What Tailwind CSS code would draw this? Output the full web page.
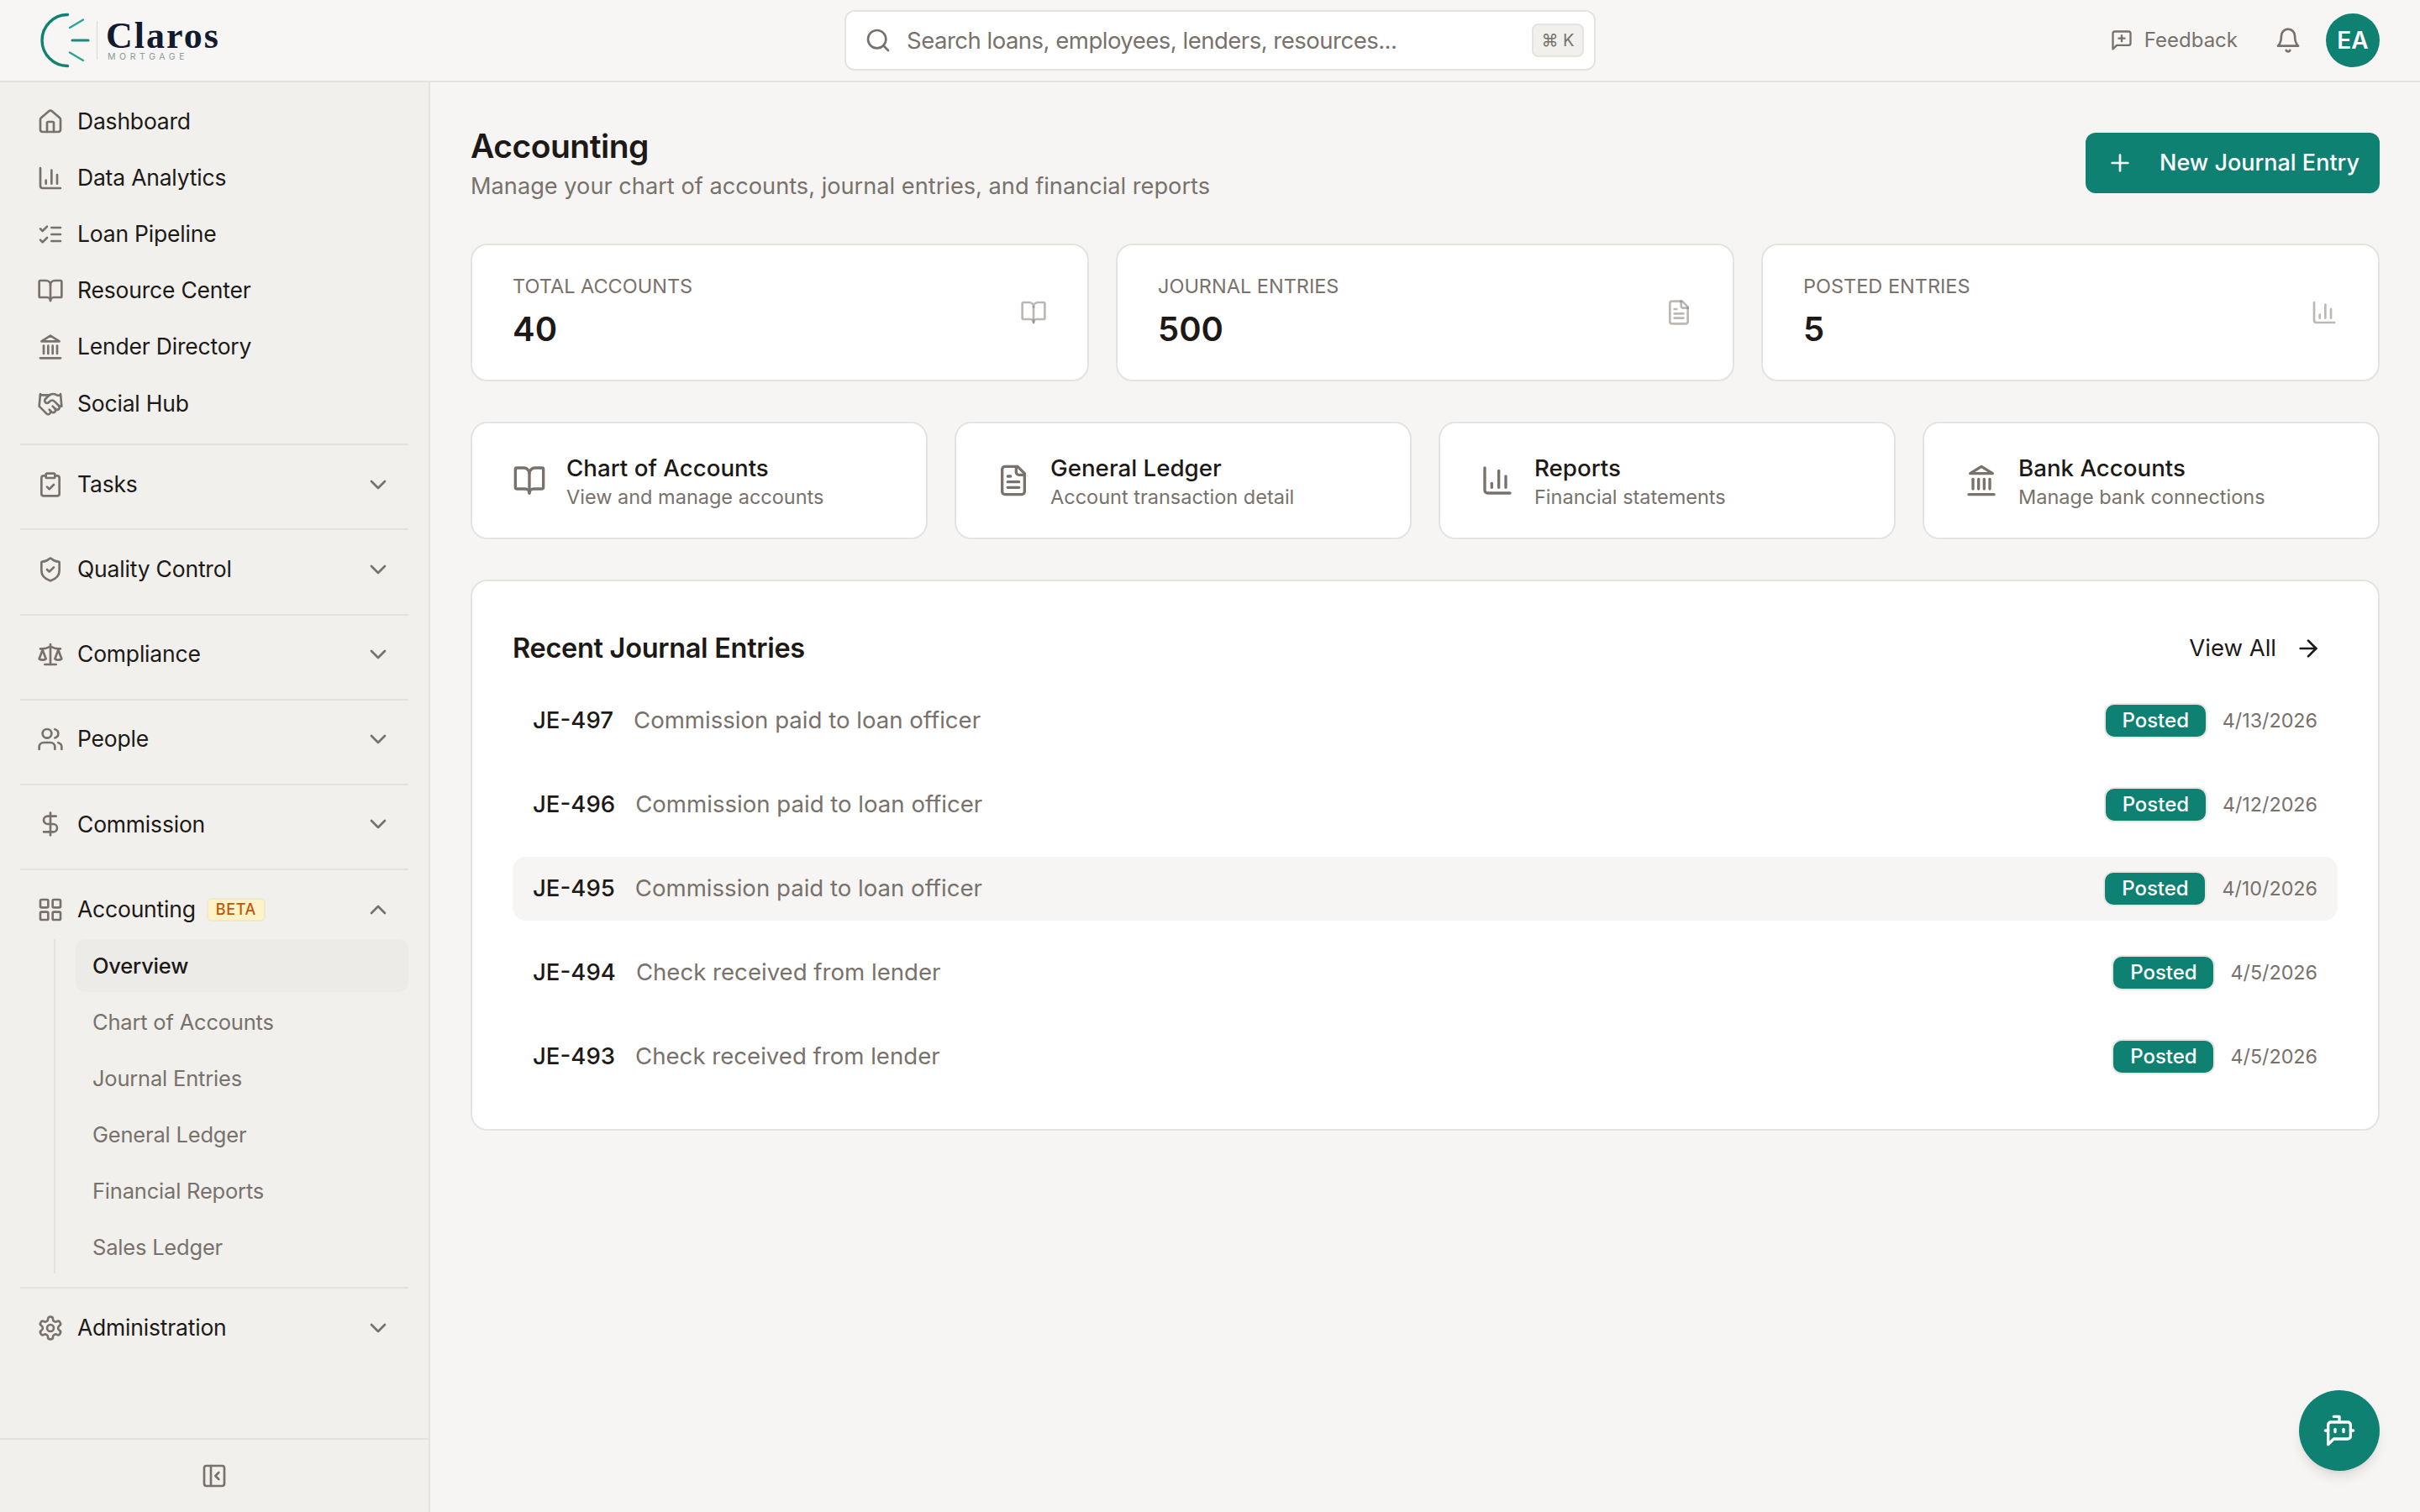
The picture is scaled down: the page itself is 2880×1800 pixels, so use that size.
<!DOCTYPE html>
<html lang="en">
<head>
  <meta charset="UTF-8" />
  <title>Claros Mortgage - Accounting</title>
  <script src="https://cdn.jsdelivr.net/npm/@tailwindcss/browser@4"></script>
</head>
<body class="h-screen overflow-hidden flex flex-col bg-[#f6f5f3] text-[#1c1917] font-['Inter',sans-serif]">
  <!-- icon sprite -->
  <svg class="hidden">
    <symbol id="i-home" viewBox="0 0 24 24"><path d="M15 21v-8a1 1 0 0 0-1-1h-4a1 1 0 0 0-1 1v8"/><path d="M3 10a2 2 0 0 1 .709-1.528l7-5.999a2 2 0 0 1 2.582 0l7 5.999A2 2 0 0 1 21 10v9a2 2 0 0 1-2 2H5a2 2 0 0 1-2-2z"/></symbol>
    <symbol id="i-chart" viewBox="0 0 24 24"><path d="M3 3v16a2 2 0 0 0 2 2h16"/><path d="M18 17V9"/><path d="M13 17V5"/><path d="M8 17v-3"/></symbol>
    <symbol id="i-checks" viewBox="0 0 24 24"><path d="m3 17 2 2 4-4"/><path d="m3 7 2 2 4-4"/><path d="M13 6h8"/><path d="M13 12h8"/><path d="M13 18h8"/></symbol>
    <symbol id="i-book" viewBox="0 0 24 24"><path d="M12 7v14"/><path d="M3 18a1 1 0 0 1-1-1V4a1 1 0 0 1 1-1h5a4 4 0 0 1 4 4 4 4 0 0 1 4-4h5a1 1 0 0 1 1 1v13a1 1 0 0 1-1 1h-6a3 3 0 0 0-3 3 3 3 0 0 0-3-3z"/></symbol>
    <symbol id="i-bank" viewBox="0 0 24 24"><path d="M3 22h18"/><path d="M6 18v-7"/><path d="M10 18v-7"/><path d="M14 18v-7"/><path d="M18 18v-7"/><path d="M12 2l8 5H4z"/></symbol>
    <symbol id="i-hand" viewBox="0 0 24 24"><path d="m11 17 2 2a1 1 0 1 0 3-3"/><path d="m14 14 2.5 2.5a1 1 0 1 0 3-3l-3.88-3.88a3 3 0 0 0-4.24 0l-.88.88a1 1 0 1 1-3-3l2.81-2.81a5.79 5.79 0 0 1 7.06-.87l.47.28a2 2 0 0 0 1.42.25L21 4"/><path d="m21 3 1 11h-2"/><path d="M3 3 2 14l6.5 6.5a1 1 0 1 0 3-3"/><path d="M3 4h8"/></symbol>
    <symbol id="i-clip" viewBox="0 0 24 24"><rect x="8" y="2" width="8" height="4" rx="1"/><path d="M16 4h2a2 2 0 0 1 2 2v14a2 2 0 0 1-2 2H6a2 2 0 0 1-2-2V6a2 2 0 0 1 2-2h2"/><path d="m9 14 2 2 4-4"/></symbol>
    <symbol id="i-shield" viewBox="0 0 24 24"><path d="M20 13c0 5-3.5 7.5-7.66 8.95a1 1 0 0 1-.67-.01C7.5 20.5 4 18 4 13V6a1 1 0 0 1 1-1c2 0 4.5-1.2 6.24-2.72a1.17 1.17 0 0 1 1.52 0C14.51 3.81 17 5 19 5a1 1 0 0 1 1 1z"/><path d="m9 12 2 2 4-4"/></symbol>
    <symbol id="i-scale" viewBox="0 0 24 24"><path d="m16 16 3-8 3 8c-.87.65-1.92 1-3 1s-2.13-.35-3-1Z"/><path d="m2 16 3-8 3 8c-.87.65-1.92 1-3 1s-2.13-.35-3-1Z"/><path d="M7 21h10"/><path d="M12 3v18"/><path d="M3 7h2c2 0 5-1 7-2 2 1 5 2 7 2h2"/></symbol>
    <symbol id="i-users" viewBox="0 0 24 24"><path d="M16 21v-2a4 4 0 0 0-4-4H6a4 4 0 0 0-4 4v2"/><circle cx="9" cy="7" r="4"/><path d="M22 21v-2a4 4 0 0 0-3-3.87"/><path d="M16 3.13a4 4 0 0 1 0 7.75"/></symbol>
    <symbol id="i-dollar" viewBox="0 0 24 24"><path d="M12 2v20"/><path d="M17 5H9.5a3.5 3.5 0 0 0 0 7h5a3.5 3.5 0 0 1 0 7H6"/></symbol>
    <symbol id="i-grid" viewBox="0 0 24 24"><rect x="3" y="3" width="7" height="7" rx="1"/><rect x="14" y="3" width="7" height="7" rx="1"/><rect x="14" y="14" width="7" height="7" rx="1"/><rect x="3" y="14" width="7" height="7" rx="1"/></symbol>
    <symbol id="i-gear" viewBox="0 0 24 24"><path d="M12.22 2h-.44a2 2 0 0 0-2 2v.18a2 2 0 0 1-1 1.73l-.43.25a2 2 0 0 1-2 0l-.15-.08a2 2 0 0 0-2.73.73l-.22.38a2 2 0 0 0 .73 2.73l.15.1a2 2 0 0 1 1 1.72v.51a2 2 0 0 1-1 1.74l-.15.09a2 2 0 0 0-.73 2.73l.22.38a2 2 0 0 0 2.73.73l.15-.08a2 2 0 0 1 2 0l.43.25a2 2 0 0 1 1 1.73V20a2 2 0 0 0 2 2h.44a2 2 0 0 0 2-2v-.18a2 2 0 0 1 1-1.73l.43-.25a2 2 0 0 1 2 0l.15.08a2 2 0 0 0 2.73-.73l.22-.39a2 2 0 0 0-.73-2.73l-.15-.08a2 2 0 0 1-1-1.74v-.5a2 2 0 0 1 1-1.74l.15-.09a2 2 0 0 0 .73-2.73l-.22-.38a2 2 0 0 0-2.73-.73l-.15.08a2 2 0 0 1-2 0l-.43-.25a2 2 0 0 1-1-1.73V4a2 2 0 0 0-2-2z"/><circle cx="12" cy="12" r="3"/></symbol>
    <symbol id="i-panel" viewBox="0 0 24 24"><rect x="3" y="3" width="18" height="18" rx="2"/><path d="M9 3v18"/><path d="m16 15-3-3 3-3"/></symbol>
    <symbol id="i-file" viewBox="0 0 24 24"><path d="M15 2H6a2 2 0 0 0-2 2v16a2 2 0 0 0 2 2h12a2 2 0 0 0 2-2V7Z"/><path d="M14 2v4a2 2 0 0 0 2 2h4"/><path d="M10 9H8"/><path d="M16 13H8"/><path d="M16 17H8"/></symbol>
    <symbol id="i-down" viewBox="0 0 24 24"><path d="m6 9 6 6 6-6"/></symbol>
    <symbol id="i-up" viewBox="0 0 24 24"><path d="m18 15-6-6-6 6"/></symbol>
  </svg>

  <!-- top bar -->
  <header class="h-[98px] shrink-0 flex items-center border-b-2 border-[#e5e3df] bg-[#f7f6f4]">
    <div class="w-[1005px] shrink-0 flex items-center pl-[48px]">
      <svg class="w-[68px] h-[68px] shrink-0" viewBox="0 0 68 68" fill="none" stroke-linecap="round">
        <path d="M32.5 3.5A30.5 30.5 0 0 0 32.5 64.5" stroke="#0f8272" stroke-width="3.4"/>
        <path d="M35 19 51 9.5" stroke="#2aa593" stroke-width="2.4"/>
        <path d="M38 34h19" stroke="#1f8a7a" stroke-width="3.2"/>
        <path d="M35 48.5 51 58" stroke="#2aa593" stroke-width="2.4"/>
      </svg>
      <div class="w-px h-[46px] bg-[#d8d7d3] ml-[-1px]"></div>
      <div class="ml-[10px] mt-[1px] flex flex-col">
        <span class="font-['Liberation_Serif',serif] font-bold text-[44px] leading-[38px] tracking-[2px] text-[#111a2e]">Claros</span>
        <span class="text-[10.5px] leading-[12px] tracking-[4.6px] text-[#8a9a9a] pl-[2px]">MORTGAGE</span>
      </div>
    </div>
    <div class="w-[894px] h-[72px] shrink-0 flex items-center pl-[22px] pr-[12px] bg-white rounded-[12px] border-2 border-[#e5e3df]">
      <svg class="w-8 h-8 text-[#78716c]" fill="none" stroke="currentColor" stroke-width="2" stroke-linecap="round" stroke-linejoin="round" viewBox="0 0 24 24"><circle cx="11" cy="11" r="8"/><path d="m21 21-4.3-4.3"/></svg>
      <span class="ml-[18px] mt-[1px] text-[27.5px] tracking-[-0.5px] text-[#78716c]">Search loans, employees, lenders, resources...</span>
      <span class="ml-auto w-[62px] h-[40px] flex items-center justify-center rounded-[8px] bg-[#f1f0ed] border-2 border-[#e5e3df] text-[20px] text-[#78716c]">⌘ K</span>
    </div>
    <div class="ml-auto pr-[48px] flex items-center">
      <svg class="w-7 h-7 text-[#78716c]" fill="none" stroke="currentColor" stroke-width="2" stroke-linecap="round" stroke-linejoin="round" viewBox="0 0 24 24"><path d="M21 15a2 2 0 0 1-2 2H7l-4 4V5a2 2 0 0 1 2-2h14a2 2 0 0 1 2 2z"/><path d="M12 7v6"/><path d="M9 10h6"/></svg>
      <span class="ml-[13px] text-[24px] text-[#78716c]">Feedback</span>
      <svg class="ml-[44px] w-8 h-8 text-[#78716c]" fill="none" stroke="currentColor" stroke-width="2" stroke-linecap="round" stroke-linejoin="round" viewBox="0 0 24 24"><path d="M6 8a6 6 0 0 1 12 0c0 7 3 9 3 9H3s3-2 3-9"/><path d="M10.3 21a1.94 1.94 0 0 0 3.4 0"/></svg>
      <div class="ml-[29px] w-16 h-16 rounded-full bg-[#0f8172] text-white flex items-center justify-center text-[28px] font-semibold">EA</div>
    </div>
  </header>

  <div class="flex flex-1 min-h-0">
    <!-- sidebar -->
    <aside class="w-[512px] shrink-0 flex flex-col border-r-2 border-[#e5e3df] bg-[#f1f0ed]">
      <nav class="flex-1 px-6 pt-[13px] text-[26.5px] tracking-[-0.2px]">
        <div class="pb-[14px]">
          <a class="h-[67.2px] px-5 flex items-center gap-4"><svg class="w-8 h-8 text-[#78716c]" fill="none" stroke="currentColor" stroke-width="2" stroke-linecap="round" stroke-linejoin="round"><use href="#i-home"/></svg>Dashboard</a>
          <a class="h-[67.2px] px-5 flex items-center gap-4"><svg class="w-8 h-8 text-[#78716c]" fill="none" stroke="currentColor" stroke-width="2" stroke-linecap="round" stroke-linejoin="round"><use href="#i-chart"/></svg>Data Analytics</a>
          <a class="h-[67.2px] px-5 flex items-center gap-4"><svg class="w-8 h-8 text-[#78716c]" fill="none" stroke="currentColor" stroke-width="2" stroke-linecap="round" stroke-linejoin="round"><use href="#i-checks"/></svg>Loan Pipeline</a>
          <a class="h-[67.2px] px-5 flex items-center gap-4"><svg class="w-8 h-8 text-[#78716c]" fill="none" stroke="currentColor" stroke-width="2" stroke-linecap="round" stroke-linejoin="round"><use href="#i-book"/></svg>Resource Center</a>
          <a class="h-[67.2px] px-5 flex items-center gap-4"><svg class="w-8 h-8 text-[#78716c]" fill="none" stroke="currentColor" stroke-width="2" stroke-linecap="round" stroke-linejoin="round"><use href="#i-bank"/></svg>Lender Directory</a>
          <a class="h-[67.2px] px-5 flex items-center gap-4"><svg class="w-8 h-8 text-[#78716c]" fill="none" stroke="currentColor" stroke-width="2" stroke-linecap="round" stroke-linejoin="round"><use href="#i-hand"/></svg>Social Hub</a>
        </div>

        <div class="border-t-2 border-[#e5e3df] pt-[13px] pb-[19px]">
          <a class="h-[67.2px] px-5 flex items-center gap-4"><svg class="w-8 h-8 text-[#78716c]" fill="none" stroke="currentColor" stroke-width="2" stroke-linecap="round" stroke-linejoin="round"><use href="#i-clip"/></svg>Tasks<svg class="ml-auto w-8 h-8 text-[#78716c]" fill="none" stroke="currentColor" stroke-width="2" stroke-linecap="round" stroke-linejoin="round"><use href="#i-down"/></svg></a>
        </div>
        <div class="border-t-2 border-[#e5e3df] pt-[13px] pb-[19px]">
          <a class="h-[67.2px] px-5 flex items-center gap-4"><svg class="w-8 h-8 text-[#78716c]" fill="none" stroke="currentColor" stroke-width="2" stroke-linecap="round" stroke-linejoin="round"><use href="#i-shield"/></svg>Quality Control<svg class="ml-auto w-8 h-8 text-[#78716c]" fill="none" stroke="currentColor" stroke-width="2" stroke-linecap="round" stroke-linejoin="round"><use href="#i-down"/></svg></a>
        </div>
        <div class="border-t-2 border-[#e5e3df] pt-[13px] pb-[19px]">
          <a class="h-[67.2px] px-5 flex items-center gap-4"><svg class="w-8 h-8 text-[#78716c]" fill="none" stroke="currentColor" stroke-width="2" stroke-linecap="round" stroke-linejoin="round"><use href="#i-scale"/></svg>Compliance<svg class="ml-auto w-8 h-8 text-[#78716c]" fill="none" stroke="currentColor" stroke-width="2" stroke-linecap="round" stroke-linejoin="round"><use href="#i-down"/></svg></a>
        </div>
        <div class="border-t-2 border-[#e5e3df] pt-[13px] pb-[19px]">
          <a class="h-[67.2px] px-5 flex items-center gap-4"><svg class="w-8 h-8 text-[#78716c]" fill="none" stroke="currentColor" stroke-width="2" stroke-linecap="round" stroke-linejoin="round"><use href="#i-users"/></svg>People<svg class="ml-auto w-8 h-8 text-[#78716c]" fill="none" stroke="currentColor" stroke-width="2" stroke-linecap="round" stroke-linejoin="round"><use href="#i-down"/></svg></a>
        </div>
        <div class="border-t-2 border-[#e5e3df] pt-[13px] pb-[19px]">
          <a class="h-[67.2px] px-5 flex items-center gap-4"><svg class="w-8 h-8 text-[#78716c]" fill="none" stroke="currentColor" stroke-width="2" stroke-linecap="round" stroke-linejoin="round"><use href="#i-dollar"/></svg>Commission<svg class="ml-auto w-8 h-8 text-[#78716c]" fill="none" stroke="currentColor" stroke-width="2" stroke-linecap="round" stroke-linejoin="round"><use href="#i-down"/></svg></a>
        </div>

        <div class="border-t-2 border-[#e5e3df] pt-[13px] pb-4">
          <a class="h-[67.2px] px-5 flex items-center gap-4"><svg class="w-8 h-8 text-[#78716c]" fill="none" stroke="currentColor" stroke-width="2" stroke-linecap="round" stroke-linejoin="round"><use href="#i-grid"/></svg>Accounting
            <span class="-ml-[3px] h-[28px] px-[9px] flex items-center rounded-[6px] bg-[#fef3c7] border-2 border-[#efe8d2] text-[18px] font-medium tracking-[0.6px] text-[#c2540a]">BETA</span>
            <svg class="ml-auto w-8 h-8 text-[#78716c]" fill="none" stroke="currentColor" stroke-width="2" stroke-linecap="round" stroke-linejoin="round"><use href="#i-up"/></svg></a>
          <div class="mt-[2px] ml-10 pl-6 border-l-2 border-[#e5e3df] flex flex-col gap-1 text-[25.5px] text-[#78716c]">
            <a class="h-[63px] px-5 flex items-center rounded-[12px] bg-[#ecebe8] text-[#1c1917] font-medium">Overview</a>
            <a class="h-[63px] px-5 flex items-center">Chart of Accounts</a>
            <a class="h-[63px] px-5 flex items-center">Journal Entries</a>
            <a class="h-[63px] px-5 flex items-center">General Ledger</a>
            <a class="h-[63px] px-5 flex items-center">Financial Reports</a>
            <a class="h-[63px] px-5 flex items-center">Sales Ledger</a>
          </div>
        </div>

        <div class="border-t-2 border-[#e5e3df] pt-[13px]">
          <a class="h-[67.2px] px-5 flex items-center gap-4"><svg class="w-8 h-8 text-[#78716c]" fill="none" stroke="currentColor" stroke-width="2" stroke-linecap="round" stroke-linejoin="round"><use href="#i-gear"/></svg>Administration<svg class="ml-auto w-8 h-8 text-[#78716c]" fill="none" stroke="currentColor" stroke-width="2" stroke-linecap="round" stroke-linejoin="round"><use href="#i-down"/></svg></a>
        </div>
      </nav>
      <div class="h-[88px] shrink-0 border-t-2 border-[#e5e3df] flex items-center justify-center">
        <svg class="w-8 h-8 text-[#78716c]" fill="none" stroke="currentColor" stroke-width="2" stroke-linecap="round" stroke-linejoin="round"><use href="#i-panel"/></svg>
      </div>
    </aside>

    <!-- main -->
    <main class="flex-1 min-w-0 px-12 pt-12">
      <div class="h-24 flex items-center justify-between">
        <div>
          <h1 class="text-[39px] leading-[56px] font-semibold tracking-[-0.5px]">Accounting</h1>
          <p class="text-[27.2px] leading-[40px] text-[#78716c]">Manage your chart of accounts, journal entries, and financial reports</p>
        </div>
        <button class="w-[350px] h-[72px] flex items-center pl-[25px] rounded-[12px] bg-[#0f8172] text-white text-[27px] font-medium">
          <svg class="w-8 h-8" fill="none" stroke="currentColor" stroke-width="2" stroke-linecap="round" stroke-linejoin="round" viewBox="0 0 24 24"><path d="M5 12h14"/><path d="M12 5v14"/></svg>
          <span class="ml-[31px]">New Journal Entry</span>
        </button>
      </div>

      <div class="mt-12 grid grid-cols-3 gap-8">
        <div class="h-[164px] px-12 flex items-center justify-between bg-white rounded-[20px] border-2 border-[#e5e3df]">
          <div><div class="text-[23.5px] leading-[34px] text-[#78716c]">TOTAL ACCOUNTS</div><div class="mt-[6px] text-[40px] leading-[56px] font-semibold">40</div></div>
          <svg class="w-8 h-8 text-[#78716c]/50" fill="none" stroke="currentColor" stroke-width="2" stroke-linecap="round" stroke-linejoin="round"><use href="#i-book"/></svg>
        </div>
        <div class="h-[164px] px-12 flex items-center justify-between bg-white rounded-[20px] border-2 border-[#e5e3df]">
          <div><div class="text-[23.5px] leading-[34px] text-[#78716c]">JOURNAL ENTRIES</div><div class="mt-[6px] text-[40px] leading-[56px] font-semibold">500</div></div>
          <svg class="w-8 h-8 text-[#78716c]/50" fill="none" stroke="currentColor" stroke-width="2" stroke-linecap="round" stroke-linejoin="round"><use href="#i-file"/></svg>
        </div>
        <div class="h-[164px] px-12 flex items-center justify-between bg-white rounded-[20px] border-2 border-[#e5e3df]">
          <div><div class="text-[23.5px] leading-[34px] text-[#78716c]">POSTED ENTRIES</div><div class="mt-[6px] text-[40px] leading-[56px] font-semibold">5</div></div>
          <svg class="w-8 h-8 text-[#78716c]/50" fill="none" stroke="currentColor" stroke-width="2" stroke-linecap="round" stroke-linejoin="round"><use href="#i-chart"/></svg>
        </div>
      </div>

      <div class="mt-12 grid grid-cols-4 gap-8">
        <div class="h-[140px] pl-12 flex items-center gap-6 bg-white rounded-[20px] border-2 border-[#e5e3df]">
          <svg class="w-10 h-10 text-[#78716c]" fill="none" stroke="currentColor" stroke-width="2" stroke-linecap="round" stroke-linejoin="round"><use href="#i-book"/></svg>
          <div class="mt-[3px]"><div class="text-[27.7px] leading-[36px] font-medium">Chart of Accounts</div><div class="text-[23.5px] leading-[34px] text-[#78716c]">View and manage accounts</div></div>
        </div>
        <div class="h-[140px] pl-12 flex items-center gap-6 bg-white rounded-[20px] border-2 border-[#e5e3df]">
          <svg class="w-10 h-10 text-[#78716c]" fill="none" stroke="currentColor" stroke-width="2" stroke-linecap="round" stroke-linejoin="round"><use href="#i-file"/></svg>
          <div class="mt-[3px]"><div class="text-[27.7px] leading-[36px] font-medium">General Ledger</div><div class="text-[23.5px] leading-[34px] text-[#78716c]">Account transaction detail</div></div>
        </div>
        <div class="h-[140px] pl-12 flex items-center gap-6 bg-white rounded-[20px] border-2 border-[#e5e3df]">
          <svg class="w-10 h-10 text-[#78716c]" fill="none" stroke="currentColor" stroke-width="2" stroke-linecap="round" stroke-linejoin="round"><use href="#i-chart"/></svg>
          <div class="mt-[3px]"><div class="text-[27.7px] leading-[36px] font-medium">Reports</div><div class="text-[23.5px] leading-[34px] text-[#78716c]">Financial statements</div></div>
        </div>
        <div class="h-[140px] pl-12 flex items-center gap-6 bg-white rounded-[20px] border-2 border-[#e5e3df]">
          <svg class="w-10 h-10 text-[#78716c]" fill="none" stroke="currentColor" stroke-width="2" stroke-linecap="round" stroke-linejoin="round"><use href="#i-bank"/></svg>
          <div class="mt-[3px]"><div class="text-[27.7px] leading-[36px] font-medium">Bank Accounts</div><div class="text-[23.5px] leading-[34px] text-[#78716c]">Manage bank connections</div></div>
        </div>
      </div>

      <section class="mt-12 px-12 pt-12 pb-12 bg-white rounded-[20px] border-2 border-[#e5e3df]">
        <div class="h-16 flex items-center justify-between pr-[19px]">
          <h2 class="text-[32.5px] font-semibold tracking-[-0.3px]">Recent Journal Entries</h2>
          <a class="flex items-center gap-[22px] text-[27.5px]">View All
            <svg class="w-8 h-8" fill="none" stroke="currentColor" stroke-width="2" stroke-linecap="round" stroke-linejoin="round" viewBox="0 0 24 24"><path d="M5 12h14"/><path d="m12 5 7 7-7 7"/></svg></a>
        </div>
        <div class="mt-4 flex flex-col gap-6 text-[27.6px]">
          <div class="h-[76px] px-6 flex items-center rounded-[16px]"><span class="font-medium">JE-497</span><span class="ml-6 text-[#78716c]">Commission paid to loan officer</span><span class="ml-auto h-[42px] w-[123px] flex items-center justify-center rounded-[12px] border-2 border-[#ebe6e2] bg-[#0f8172] text-white text-[24px] font-medium">Posted</span><span class="ml-[18px] text-[23.3px] text-[#78716c]">4/13/2026</span></div>
          <div class="h-[76px] px-6 flex items-center rounded-[16px]"><span class="font-medium">JE-496</span><span class="ml-6 text-[#78716c]">Commission paid to loan officer</span><span class="ml-auto h-[42px] w-[123px] flex items-center justify-center rounded-[12px] border-2 border-[#ebe6e2] bg-[#0f8172] text-white text-[24px] font-medium">Posted</span><span class="ml-[18px] text-[23.3px] text-[#78716c]">4/12/2026</span></div>
          <div class="h-[76px] px-6 flex items-center rounded-[16px] bg-[#f6f5f3]"><span class="font-medium">JE-495</span><span class="ml-6 text-[#78716c]">Commission paid to loan officer</span><span class="ml-auto h-[42px] w-[123px] flex items-center justify-center rounded-[12px] border-2 border-[#ebe6e2] bg-[#0f8172] text-white text-[24px] font-medium">Posted</span><span class="ml-[18px] text-[23.3px] text-[#78716c]">4/10/2026</span></div>
          <div class="h-[76px] px-6 flex items-center rounded-[16px]"><span class="font-medium">JE-494</span><span class="ml-6 text-[#78716c]">Check received from lender</span><span class="ml-auto h-[42px] w-[123px] flex items-center justify-center rounded-[12px] border-2 border-[#ebe6e2] bg-[#0f8172] text-white text-[24px] font-medium">Posted</span><span class="ml-[18px] text-[23.3px] text-[#78716c]">4/5/2026</span></div>
          <div class="h-[76px] px-6 flex items-center rounded-[16px]"><span class="font-medium">JE-493</span><span class="ml-6 text-[#78716c]">Check received from lender</span><span class="ml-auto h-[42px] w-[123px] flex items-center justify-center rounded-[12px] border-2 border-[#ebe6e2] bg-[#0f8172] text-white text-[24px] font-medium">Posted</span><span class="ml-[18px] text-[23.3px] text-[#78716c]">4/5/2026</span></div>
        </div>
      </section>
    </main>
  </div>

  <button class="absolute right-12 bottom-[49px] w-24 h-24 rounded-full bg-[#0f8172] text-white flex items-center justify-center shadow-lg">
    <svg class="w-10 h-10" fill="none" stroke="currentColor" stroke-width="2" stroke-linecap="round" stroke-linejoin="round" viewBox="0 0 24 24"><path d="M12 6V2H8"/><path d="m8 18-4 4V8a2 2 0 0 1 2-2h12a2 2 0 0 1 2 2v8a2 2 0 0 1-2 2Z"/><path d="M2 12h2"/><path d="M9 11v2"/><path d="M15 11v2"/><path d="M20 12h2"/></svg>
  </button>
</body>
</html>
